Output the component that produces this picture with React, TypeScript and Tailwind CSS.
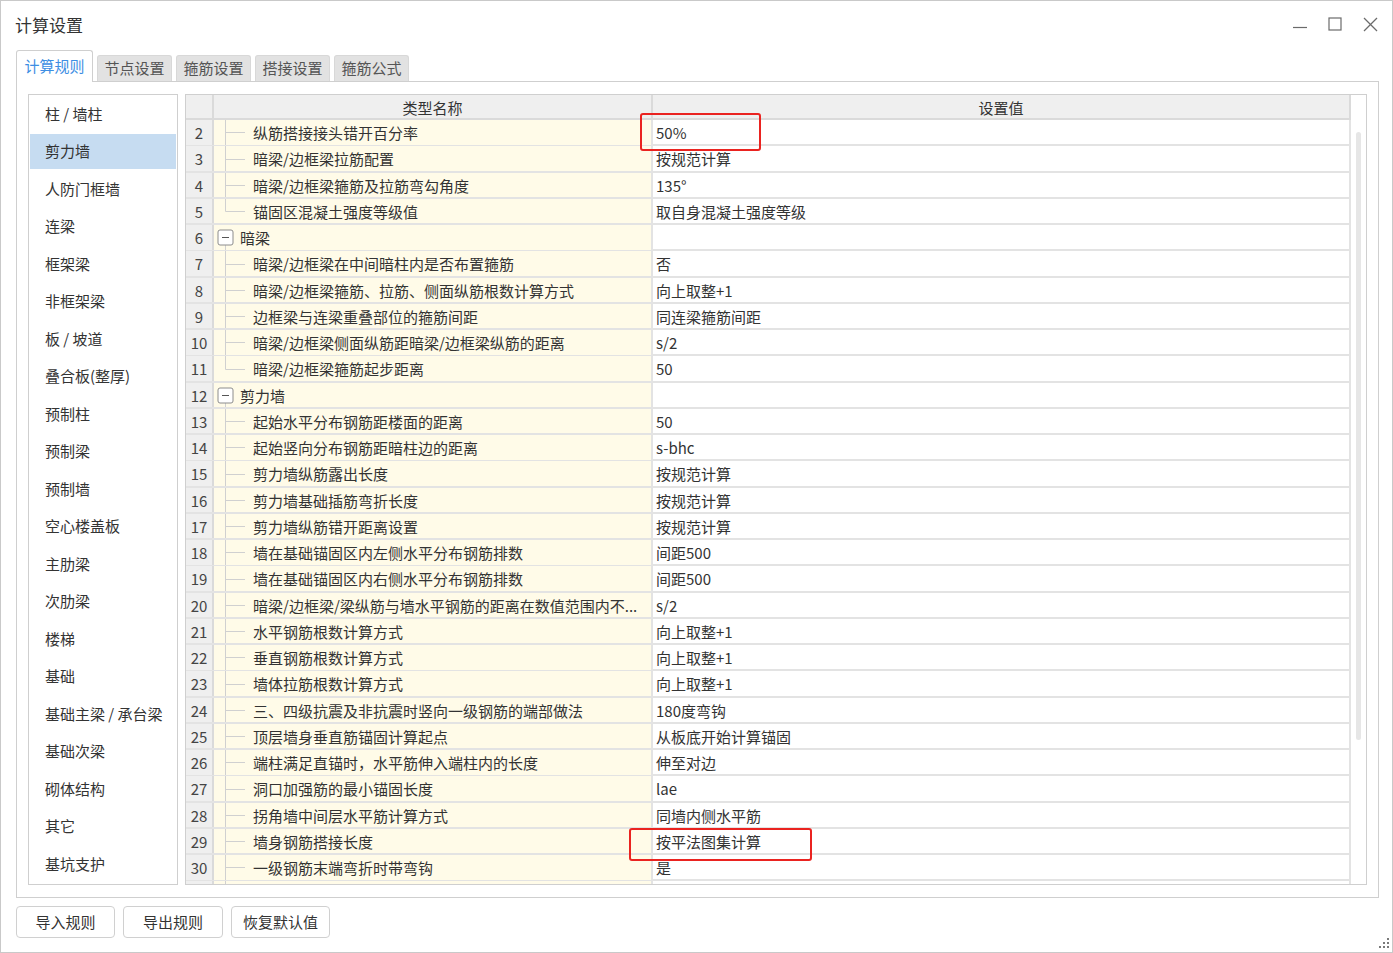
import React from "react";

type Row = { n: number; name: string; value?: string; kind: "child" | "last" | "group" };

const rows: Row[] = [
  { n: 2, name: "纵筋搭接接头错开百分率", value: "50%", kind: "child" },
  { n: 3, name: "暗梁/边框梁拉筋配置", value: "按规范计算", kind: "child" },
  { n: 4, name: "暗梁/边框梁箍筋及拉筋弯勾角度", value: "135°", kind: "child" },
  { n: 5, name: "锚固区混凝土强度等级值", value: "取自身混凝土强度等级", kind: "last" },
  { n: 6, name: "暗梁", kind: "group" },
  { n: 7, name: "暗梁/边框梁在中间暗柱内是否布置箍筋", value: "否", kind: "child" },
  { n: 8, name: "暗梁/边框梁箍筋、拉筋、侧面纵筋根数计算方式", value: "向上取整+1", kind: "child" },
  { n: 9, name: "边框梁与连梁重叠部位的箍筋间距", value: "同连梁箍筋间距", kind: "child" },
  { n: 10, name: "暗梁/边框梁侧面纵筋距暗梁/边框梁纵筋的距离", value: "s/2", kind: "child" },
  { n: 11, name: "暗梁/边框梁箍筋起步距离", value: "50", kind: "last" },
  { n: 12, name: "剪力墙", kind: "group" },
  { n: 13, name: "起始水平分布钢筋距楼面的距离", value: "50", kind: "child" },
  { n: 14, name: "起始竖向分布钢筋距暗柱边的距离", value: "s-bhc", kind: "child" },
  { n: 15, name: "剪力墙纵筋露出长度", value: "按规范计算", kind: "child" },
  { n: 16, name: "剪力墙基础插筋弯折长度", value: "按规范计算", kind: "child" },
  { n: 17, name: "剪力墙纵筋错开距离设置", value: "按规范计算", kind: "child" },
  { n: 18, name: "墙在基础锚固区内左侧水平分布钢筋排数", value: "间距500", kind: "child" },
  { n: 19, name: "墙在基础锚固区内右侧水平分布钢筋排数", value: "间距500", kind: "child" },
  { n: 20, name: "暗梁/边框梁/梁纵筋与墙水平钢筋的距离在数值范围内不...", value: "s/2", kind: "child" },
  { n: 21, name: "水平钢筋根数计算方式", value: "向上取整+1", kind: "child" },
  { n: 22, name: "垂直钢筋根数计算方式", value: "向上取整+1", kind: "child" },
  { n: 23, name: "墙体拉筋根数计算方式", value: "向上取整+1", kind: "child" },
  { n: 24, name: "三、四级抗震及非抗震时竖向一级钢筋的端部做法", value: "180度弯钩", kind: "child" },
  { n: 25, name: "顶层墙身垂直筋锚固计算起点", value: "从板底开始计算锚固", kind: "child" },
  { n: 26, name: "端柱满足直锚时，水平筋伸入端柱内的长度", value: "伸至对边", kind: "child" },
  { n: 27, name: "洞口加强筋的最小锚固长度", value: "lae", kind: "child" },
  { n: 28, name: "拐角墙中间层水平筋计算方式", value: "同墙内侧水平筋", kind: "child" },
  { n: 29, name: "墙身钢筋搭接长度", value: "按平法图集计算", kind: "child" },
  { n: 30, name: "一级钢筋末端弯折时带弯钩", value: "是", kind: "child" },
];

const sideItems = [
  "柱 / 墙柱",
  "剪力墙",
  "人防门框墙",
  "连梁",
  "框架梁",
  "非框架梁",
  "板 / 坡道",
  "叠合板(整厚)",
  "预制柱",
  "预制梁",
  "预制墙",
  "空心楼盖板",
  "主肋梁",
  "次肋梁",
  "楼梯",
  "基础",
  "基础主梁 / 承台梁",
  "基础次梁",
  "砌体结构",
  "其它",
  "基坑支护",
];

const tabs = ["计算规则", "节点设置", "箍筋设置", "搭接设置", "箍筋公式"];

function Connector({ kind }: { kind: Row["kind"] }) {
  if (kind === "group") {
    return (
      <svg width="26" height="26" viewBox="0 0 26 26" className="shrink-0">
        <line x1="11.5" y1="21" x2="11.5" y2="26" stroke="#d0d0d0" strokeWidth="1" />
        <rect x="4" y="6" width="15" height="15" rx="2" fill="#ffffff" stroke="#8c8c8c" strokeWidth="1" />
        <line x1="8" y1="13.5" x2="15" y2="13.5" stroke="#555" strokeWidth="1" />
      </svg>
    );
  }
  return (
    <svg width="39" height="26" viewBox="0 0 39 26" className="shrink-0">
      <line x1="11.5" y1="0" x2="11.5" y2={kind === "last" ? 13.5 : 26} stroke="#d0d0d0" strokeWidth="1" />
      <line x1="11.5" y1="13.5" x2="31" y2="13.5" stroke="#d0d0d0" strokeWidth="1" />
    </svg>
  );
}

export default function App() {
  return (
    <div className="relative w-[1393px] h-[953px] bg-white border border-[#c9c9c9] flex flex-col font-['Noto_Sans_CJK_SC',sans-serif] text-[#333] overflow-hidden">
      {/* Title bar */}
      <div className="h-[49px] flex items-start justify-between shrink-0">
        <div className="pl-[14px] pt-[12px] text-[17px] leading-[24px] text-[#333]">计算设置</div>
        <div className="flex items-start gap-[21px] pt-[16px] pr-[14px]">
          <svg width="14" height="14" viewBox="0 0 14 14">
            <line x1="0" y1="10.5" x2="14" y2="10.5" stroke="#6b6b6b" strokeWidth="1.2" />
          </svg>
          <svg width="14" height="14" viewBox="0 0 14 14">
            <rect x="1" y="1" width="12" height="12" fill="none" stroke="#6b6b6b" strokeWidth="1.2" />
          </svg>
          <svg width="15" height="15" viewBox="0 0 15 15">
            <line x1="1" y1="1" x2="14" y2="14" stroke="#6b6b6b" strokeWidth="1.3" />
            <line x1="14" y1="1" x2="1" y2="14" stroke="#6b6b6b" strokeWidth="1.3" />
          </svg>
        </div>
      </div>

      {/* Tabs */}
      <div className="h-[31px] flex items-end gap-[4px] pl-[15px] shrink-0 relative z-10">
        {tabs.map((t, i) =>
          i === 0 ? (
            <div
              key={t}
              className="h-[32px] -mb-[1px] w-[77px] flex items-center justify-center bg-white border border-b-0 border-[#cfcfcf] rounded-t-[3px] text-[15px] text-[#3d8ee3]"
            >
              {t}
            </div>
          ) : (
            <div
              key={t}
              className="h-[26px] w-[75px] flex items-center justify-center bg-[#e2e2e2] border border-b-0 border-[#d8d8d8] rounded-t-[3px] text-[15px] text-[#555]"
            >
              {t}
            </div>
          )
        )}
      </div>

      {/* Panel */}
      <div className="ml-[15px] w-[1363px] h-[817px] border border-[#cfcfcf] shrink-0 flex pl-[11px] pr-[11px] pt-[12px] pb-[12px] gap-[7px]">
        {/* Side list */}
        <div className="w-[150px] h-[791px] border border-[#cfcfcf] bg-white flex flex-col">
          {sideItems.map((s, i) => (
            <div key={s} className="h-[37.5px] px-[1px] py-[1px] shrink-0">
              <div
                className={
                  "h-full flex items-center pl-[15px] text-[15px] text-[#333] " +
                  (i === 1 ? "bg-[#c6dcf1]" : "")
                }
              >
                {s}
              </div>
            </div>
          ))}
        </div>

        {/* Grid */}
        <div className="w-[1182px] h-[791px] border border-[#cfcfcf] bg-white flex overflow-hidden">
          <div className="w-[1165px] flex flex-col overflow-hidden">
            <div className="h-[25px] shrink-0 grid grid-cols-[28px_439px_698px] bg-[#efefef] border-b-2 border-[#dadada] text-[15px]">
              <div className="border-r-2 border-[#dadada]" />
              <div className="border-r-2 border-[#dadada] flex items-center justify-center">
                <span className="mt-[2px]">类型名称</span>
              </div>
              <div className="border-r-2 border-[#dadada] flex items-center justify-center">
                <span className="mt-[2px]">设置值</span>
              </div>
            </div>
            {rows.map((r) => (
              <div
                key={r.n}
                className="h-[26.25px] shrink-0 grid grid-cols-[28px_439px_698px] border-b-2 border-[#e3e3e3] text-[15px]"
              >
                <div className="bg-[#efefef] border-r-2 border-[#dadada] flex items-center justify-center text-[#444]">
                  <span className="mt-[2px]">{r.n}</span>
                </div>
                <div className="bg-[#fffbe8] border-r-2 border-[#e3e3e3] flex items-center overflow-hidden whitespace-nowrap">
                  <Connector kind={r.kind} />
                  <span className="mt-[2px]">{r.name}</span>
                </div>
                <div className="border-r-2 border-[#e3e3e3] flex items-center pl-[3px] whitespace-nowrap">
                  <span className="mt-[2px]">{r.value ?? ""}</span>
                </div>
              </div>
            ))}
            <div className="h-[26.25px] shrink-0 grid grid-cols-[28px_439px_698px] border-b-2 border-[#e3e3e3]">
              <div className="bg-[#efefef] border-r-2 border-[#dadada]" />
              <div className="bg-[#fffbe8] border-r-2 border-[#e3e3e3] flex items-center">
                <Connector kind="child" />
              </div>
              <div className="border-r-2 border-[#e3e3e3]" />
            </div>
          </div>
          <div className="w-[15px] flex flex-col pt-[37px] pl-[5px]">
            <div className="w-[5px] h-[608px] bg-[#e6e6e6] rounded-[3px]" />
          </div>
        </div>
      </div>

      {/* Buttons */}
      <div className="flex gap-[8px] ml-[15px] mt-[8px]">
        {["导入规则", "导出规则", "恢复默认值"].map((b, i) => (
          <div
            key={b}
            className={
              "h-[32px] flex items-center justify-center bg-white border border-[#d0d0d0] rounded-[4px] text-[15px] text-[#333] " +
              (i === 1 ? "w-[100px]" : "w-[99px]")
            }
          >
            {b}
          </div>
        ))}
      </div>

      {/* Red annotation boxes */}
      <div className="absolute left-[639px] top-[112px] w-[121px] h-[38px] border-2 border-[#ea2320] rounded-[3px] pointer-events-none" />
      <div className="absolute left-[628px] top-[827px] w-[183px] h-[33px] border-2 border-[#ea2320] rounded-[3px] pointer-events-none" />

      {/* Resize grip */}
      <svg className="absolute right-[3px] bottom-[4px]" width="10" height="10" viewBox="0 0 10 10">
        <rect x="8" y="0" width="2" height="2" fill="#7a7a7a" />
        <rect x="4" y="4" width="2" height="2" fill="#7a7a7a" />
        <rect x="8" y="4" width="2" height="2" fill="#7a7a7a" />
        <rect x="0" y="8" width="2" height="2" fill="#7a7a7a" />
        <rect x="4" y="8" width="2" height="2" fill="#7a7a7a" />
        <rect x="8" y="8" width="2" height="2" fill="#7a7a7a" />
      </svg>
    </div>
  );
}
